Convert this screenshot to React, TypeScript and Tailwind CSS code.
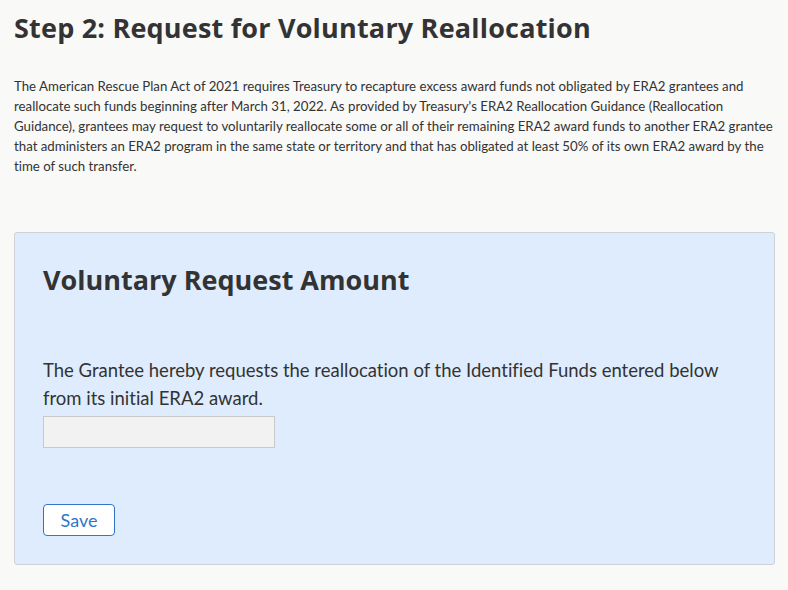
export default function App() {
  return (
    <div className="min-h-[590px] bg-[#f9f9f8] font-['Lato',sans-serif] text-[#333] [font-variant-ligatures:none]">
      <div className="px-[14px] pt-[10px]">
        <h1 className="font-['Open_Sans',sans-serif] text-[27px] font-bold leading-[36px] tracking-[0.2px] text-[#333]">
          Step 2: Request for Voluntary Reallocation
        </h1>
        <p className="mt-[30px] text-[13.25px] leading-[20px] text-[#333]">
          The American Rescue Plan Act of 2021 requires Treasury to recapture excess award funds not obligated by ERA2 grantees and
          <br />
          reallocate such funds beginning after March 31, 2022. As provided by Treasury's ERA2 Reallocation Guidance (Reallocation
          <br />
          Guidance), grantees may request to voluntarily reallocate some or all of their remaining ERA2 award funds to another ERA2 grantee
          <br />
          that administers an ERA2 program in the same state or territory and that has obligated at least 50% of its own ERA2 award by the
          <br />
          time of such transfer.
        </p>
      </div>
      <div className="ml-[14px] mr-[13px] mt-[56px] h-[333px] rounded-[3px] border border-[#cfd3d8] bg-[#dfecfd] px-[28px] pt-[29px]">
        <h2 className="font-['Open_Sans',sans-serif] text-[27px] font-bold leading-[36px] text-[#333]">
          Voluntary Request Amount
        </h2>
        <p className="mt-[58px] whitespace-nowrap text-[18.5px] leading-[28px] text-[#333]">
          The Grantee hereby requests the reallocation of the Identified Funds entered below
          <br />
          from its initial ERA2 award.
        </p>
        <input
          type="text"
          className="mt-[4px] block h-[32px] w-[232px] border border-[#c9c9c9] bg-[#f2f2f2] px-2 text-[16px] outline-none"
        />
        <button className="mt-[56px] h-[32px] w-[72px] rounded-[4px] border border-[#2f76c7] bg-white text-[18px] leading-none text-[#2f76c7]">
          Save
        </button>
      </div>
    </div>
  );
}
